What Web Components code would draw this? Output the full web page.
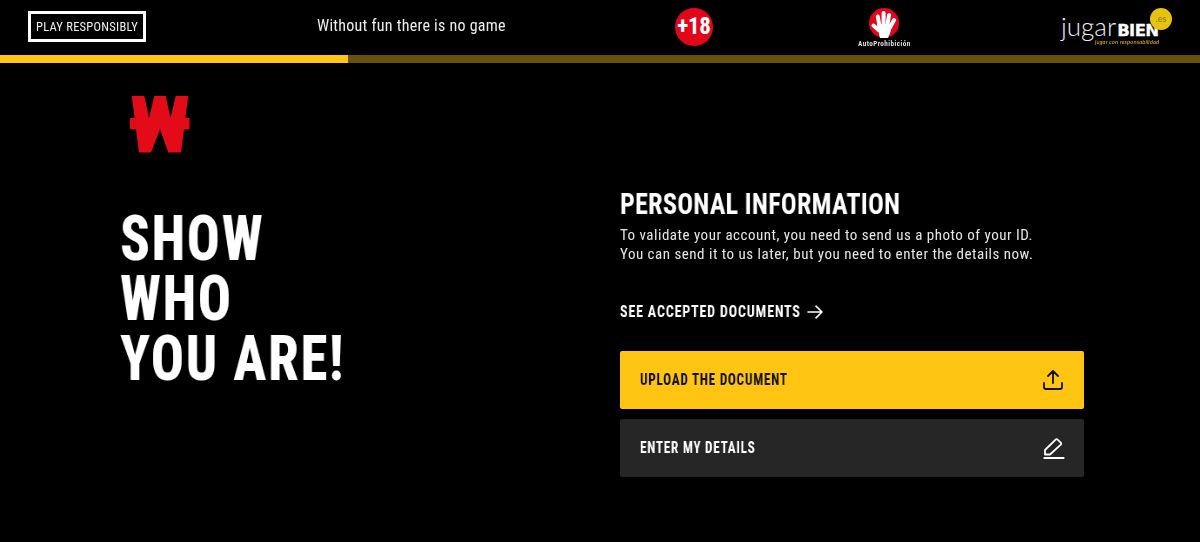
<!DOCTYPE html><html lang="en"><head><meta charset="utf-8"><style>
html,body{margin:0;background:#000;color:#fff;height:542px;overflow:hidden;font-family:Roboto,"Liberation Sans",sans-serif;font-stretch:75%}
</style></head><body>
<wp-page>
  <promo-bar></promo-bar>
  <step-progress></step-progress>
  <wp-main>
    <hero-panel slot="left"><span>SHOW</span><span>WHO</span><span>YOU ARE!</span></hero-panel>
    <info-panel slot="right"></info-panel>
  </wp-main>
</wp-page>
<script>
function def(name,html){customElements.define(name,class extends HTMLElement{constructor(){super();this.attachShadow({mode:'open'}).innerHTML=html;}});}
def('wp-page',`<style>:host{display:block;width:1200px;height:542px;background:#000}</style><slot></slot>`);
def('promo-bar',`<style>
:host{display:flex;align-items:flex-start;height:55px;box-sizing:border-box;padding:11px 0 0 28px;font-family:Roboto,sans-serif;font-stretch:75%;color:#fff}
.box{box-sizing:border-box;width:118px;height:31px;border:3px solid #fff;display:flex;align-items:center;justify-content:center;font-size:12.5px;letter-spacing:.25px;white-space:nowrap;color:#f0f0f0;will-change:transform}
.tag{margin-left:171px;width:188px;height:29px;display:flex;align-items:center;font-size:16px;letter-spacing:.25px;white-space:nowrap;color:#eee;will-change:transform}
.p18{margin:-3px 0 0 170px;width:38px;height:38px;border-radius:50%;background:#e3061a;display:flex;align-items:center;justify-content:center}
.p18 b{font:700 23px/38px Roboto,sans-serif;font-stretch:75%;letter-spacing:-.3px}
.auto{margin:-3px 0 0 145px;width:52px;display:flex;flex-direction:column;align-items:center}
.auto svg{display:block;width:30px;height:30px}
.auto span{font:700 7.2px/8px Roboto,sans-serif;font-stretch:75%;letter-spacing:.42px;color:#ddd;white-space:nowrap;margin-top:2px;will-change:transform}
.jb{margin:-3px 0 0 151px;width:111px;height:40px;display:flex;flex-direction:column;position:relative}
.jb .l{display:flex;align-items:baseline;height:30px;padding-top:6px;box-sizing:border-box;line-height:24px;white-space:nowrap}
.jb i{font:300 26px/24px Lato,sans-serif;font-style:normal;color:#eee}
.jb b{font:700 16.5px/24px "DejaVu Sans",sans-serif;letter-spacing:-.6px;font-stretch:normal;color:#fff;margin-left:1px;-webkit-text-stroke:.3px #fff}
.jb small{font:italic 400 5.9px/6px Lato,sans-serif;color:#e8b813;margin:1px 0 0 34px;letter-spacing:.1px;white-space:nowrap;will-change:transform}
.dot{position:absolute;left:89px;top:0;width:22px;height:22px;border-radius:50%;background:#e6c40d;color:#8a7410;font:400 9px/22px Lato,sans-serif;text-align:center}
</style>
<div class="box">PLAY RESPONSIBLY</div>
<div class="tag">Without fun there is no game</div>
<div class="p18"><b>+18</b></div>
<div class="auto"><svg viewBox="0 0 30 30"><circle cx="15" cy="15" r="15" fill="#e3061a"/><g stroke="#fff" stroke-width="4" stroke-linecap="round" fill="none"><path d="M10.500 18 8.800 8.500"/><path d="M14.600 17V5"/><path d="M18.400 17 20 7"/><path d="M21 19.500 25 12"/><path d="M9.500 22 4.500 17.500"/></g><path d="M8 16h15l-1.500 8-2.500 6H11l-1.500-6z" fill="#fff"/></svg><span>AutoProhibición</span></div>
<div class="jb"><div class="l"><i>jugar</i><b>BIEN</b></div><small>jugar con responsabilidad</small><div class="dot">.es</div></div>`);
def('step-progress',`<style>:host{display:block;height:8px;background:#6b5209}div{width:348px;height:8px;background:#ffc512}</style><div></div>`);
def('wp-main',`<style>:host{display:grid;grid-template-columns:500px 464px;padding:0 0 0 120px}</style><slot name="left"></slot><slot name="right"></slot>`);
def('hero-panel',`<style>
:host{display:block;padding-top:33px}
svg{display:block;width:60px;height:57px;margin-left:10px}
h1{margin:56px 0 0;font:800 63px/60px Roboto,sans-serif;font-stretch:75%;letter-spacing:2px;color:#fff;transform:scaleX(.87);transform-origin:0 0;will-change:transform}
::slotted(span){display:block}
</style><svg viewBox="0 0 60 57"><path fill="#e30b17" d="M1.700 0H14.300L19 22 24.300 0H35.700L40.500 22 45.700 0H58.300L55.400 22H59.500V33.300H54L51 56.500H38.300L30 33.300 21 56.500H9L6 33.300H0V22H4.600Z"/></svg><h1><slot></slot></h1>`);
def('info-panel',`<style>
:host{display:block;padding-top:125px;font-family:Roboto,sans-serif;font-stretch:75%}
h2{margin:0;font:700 29.5px/32px Roboto,sans-serif;font-stretch:75%;letter-spacing:.3px;color:#fff;transform:scaleX(.885);transform-origin:0 0;white-space:nowrap;will-change:transform}
p{margin:6px 0 0;font-size:15px;line-height:19px;letter-spacing:.5px;color:#e6e6e6;white-space:nowrap;will-change:transform}
</style><h2>PERSONAL INFORMATION</h2><p>To validate your account, you need to send us a photo of your ID.<br>You can send it to us later, but you need to enter the details now.</p>
<see-link></see-link>
<action-button kind="primary">UPLOAD THE DOCUMENT</action-button>
<action-button kind="dark">ENTER MY DETAILS</action-button>`);
def('see-link',`<style>
:host{display:flex;align-items:center;gap:7px;margin:38px 0 29px;height:20px;font:700 16px/20px Roboto,sans-serif;font-stretch:75%;letter-spacing:.9px;color:#fff;white-space:nowrap}
span{display:block;width:180px;transform:scaleX(.88);transform-origin:0 0;will-change:transform}
svg{width:16px;height:14px}
</style><span>SEE ACCEPTED DOCUMENTS</span><svg viewBox="0 0 16 14" fill="none" stroke="#fff" stroke-width="1.6" stroke-linecap="round" stroke-linejoin="round"><path d="M1 7H15M9 1.200 15 7 9 12.800"/></svg>`);
customElements.define('action-button',class extends HTMLElement{constructor(){super();const s=this.attachShadow({mode:'open'});
const p=this.getAttribute('kind')==='primary';
s.innerHTML=`<style>
:host{display:flex;align-items:center;justify-content:space-between;box-sizing:border-box;height:58px;padding:0 19px 0 20px;border-radius:2px;font:700 16px/20px Roboto,sans-serif;font-stretch:75%;letter-spacing:.9px;white-space:nowrap;background:${p?'#ffc512':'#262626'};color:${p?'#111':'#fff'};margin-bottom:10px}
span{display:block;transform:scaleX(.825);transform-origin:0 0;will-change:transform}
svg{width:24px;height:24px;fill:none;stroke:currentColor;stroke-width:1.8;stroke-linecap:round;stroke-linejoin:round}
</style><span><slot></slot></span>`+(p?`<svg viewBox="0 0 24 24"><path d="M3 15v4a2 2 0 0 0 2 2h14a2 2 0 0 0 2-2v-4M7 8l5-5 5 5M12 3v12"/></svg>`:`<svg viewBox="0 0 24 24"><path d="M4 18.500V14L14.600 3.600a1.400 1.400 0 0 1 2 0L19.800 6.600a1.400 1.400 0 0 1 0 2L9 18.500ZM3.300 22H22.700"/></svg>`);}});
</script></body></html>
